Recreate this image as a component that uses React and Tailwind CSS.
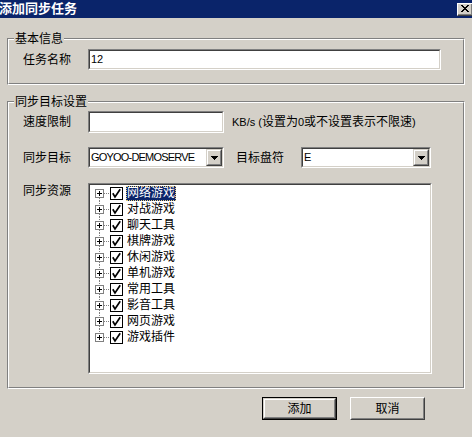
import React from "react";

function Sunken({ className = "", children }) {
  return (
    <div className={"border border-t-[#808080] border-l-[#808080] border-b-white border-r-white " + className}>
      <div className="h-full w-full border border-t-[#404040] border-l-[#404040] border-b-[#d4d0c8] border-r-[#d4d0c8] bg-white">
        {children}
      </div>
    </div>
  );
}

function Raised({ className = "", innerClassName = "", children }) {
  return (
    <div className={"border border-t-[#d4d0c8] border-l-[#d4d0c8] border-b-[#404040] border-r-[#404040] " + className}>
      <div className={"h-full w-full border border-t-white border-l-white border-b-[#808080] border-r-[#808080] bg-[#d4d0c8] " + innerClassName}>
        {children}
      </div>
    </div>
  );
}

function Group({ legend, className = "", children }) {
  return (
    <div className={"relative border border-t-[#808080] border-l-[#808080] border-b-white border-r-white " + className}>
      <div className="h-full w-full border border-t-white border-l-white border-b-[#808080] border-r-[#808080]">
        {children}
      </div>
      <span className="absolute left-[6px] top-[-7px] bg-[#d4d0c8] px-[1px] leading-[14px]">{legend}</span>
    </div>
  );
}

function Arrow() {
  return (
    <svg width="7" height="4" viewBox="0 0 7 4" shapeRendering="crispEdges">
      <rect x="0" y="0" width="7" height="1" fill="#000" />
      <rect x="1" y="1" width="5" height="1" fill="#000" />
      <rect x="2" y="2" width="3" height="1" fill="#000" />
      <rect x="3" y="3" width="1" height="1" fill="#000" />
    </svg>
  );
}

function Select({ className, value }) {
  return (
    <Sunken className={className + " h-[21px]"}>
      <div className="flex h-full">
        <span className="flex-1 pl-[1px] text-[11px] leading-[17px] tracking-[-0.8px]">{value}</span>
        <Raised className="w-[16px] h-full" innerClassName="flex items-center justify-center">
          <Arrow />
        </Raised>
      </div>
    </Sunken>
  );
}

function Connector({ first, last }) {
  return (
    <svg width="20" height="16" viewBox="0 0 20 16" shapeRendering="crispEdges" className="shrink-0">
      {!first && <line x1="9.5" y1="0" x2="9.5" y2="4" stroke="#808080" strokeDasharray="1 1" />}
      {!last && <line x1="9.5" y1="13" x2="9.5" y2="16" stroke="#808080" strokeDasharray="1 1" />}
      <line x1="14" y1="8.5" x2="20" y2="8.5" stroke="#808080" strokeDasharray="1 1" />
      <rect x="5.5" y="4.5" width="8" height="8" fill="#fff" stroke="#808080" />
      <line x1="7" y1="8.5" x2="12" y2="8.5" stroke="#000" />
      <line x1="9.5" y1="6" x2="9.5" y2="11" stroke="#000" />
    </svg>
  );
}

function Check() {
  return (
    <svg width="13" height="13" viewBox="0 0 13 13" className="shrink-0">
      <rect x="0.5" y="0.5" width="12" height="12" fill="#fff" stroke="#000" shapeRendering="crispEdges" />
      <polyline points="2.8,6.2 5,10 10.2,2.2" fill="none" stroke="#000" strokeWidth="1.7" />
    </svg>
  );
}

const items = ["网络游戏", "对战游戏", "聊天工具", "棋牌游戏", "休闲游戏", "单机游戏", "常用工具", "影音工具", "网页游戏", "游戏插件"];

function Button({ label, isDefault }) {
  const inner = (
    <Raised className="w-full h-full" innerClassName="flex items-center justify-center">
      <span className="leading-[14px]">{label}</span>
    </Raised>
  );
  if (isDefault) {
    return <div className="w-[75px] h-[23px] border border-black">{inner}</div>;
  }
  return (
    <div className="w-[75px] h-[23px] border border-t-white border-l-white border-b-[#404040] border-r-[#404040]">
      <div className="h-full w-full border border-t-[#d4d0c8] border-l-[#d4d0c8] border-b-[#808080] border-r-[#808080] bg-[#d4d0c8] flex items-center justify-center">
        <span className="leading-[14px]">{label}</span>
      </div>
    </div>
  );
}

export default function App() {
  return (
    <div className="w-[472px] h-[437px] bg-[#d4d0c8] overflow-hidden flex flex-col text-[12px] leading-[14px] text-black font-['Liberation_Sans','Noto_Sans_CJK_SC',sans-serif]">
      <div className="h-[18px] shrink-0 bg-[#0a246a] flex items-center justify-between">
        <span className="ml-[-1px] text-white font-bold text-[13px] leading-[16px]">添加同步任务</span>
        <div className="mr-[-1px] w-[16px] h-[13px] border border-t-white border-l-white border-b-[#404040] border-r-[#404040]">
          <div className="h-full w-full border-b border-r border-b-[#808080] border-r-[#808080] bg-[#d4d0c8] flex items-center justify-center">
            <svg width="8" height="7" viewBox="0 0 8 7" shapeRendering="crispEdges">
              <path d="M0 0h2v1h-2zM6 0h2v1h-2zM1 1h2v1h-2zM5 1h2v1h-2zM2 2h4v1h-4zM3 3h2v1h-2zM2 4h4v1h-4zM1 5h2v1h-2zM5 5h2v1h-2zM0 6h2v1h-2zM6 6h2v1h-2z" fill="#000" />
            </svg>
          </div>
        </div>
      </div>

      <div className="px-[7px] flex flex-col">
        <Group legend="基本信息" className="mt-[20px] h-[47px]">
          <div className="pt-[9px] flex items-center">
            <span className="w-[79px] pl-[14px]">任务名称</span>
            <Sunken className="w-[353px] h-[21px]">
              <span className="block pl-[1px] text-[11px] leading-[17px]">12</span>
            </Sunken>
          </div>
        </Group>

        <Group legend="同步目标设置" className="mt-[16px] h-[288px]">
          <div className="pt-[8px] flex flex-col">
            <div className="flex items-center">
              <span className="w-[79px] pl-[14px]">速度限制</span>
              <Sunken className="w-[136px] h-[22px]" />
              <span className="ml-[8px]"><span className="text-[11px]">KB/s (</span>设置为<span className="text-[11px]">0</span>或不设置表示不限速<span className="text-[11px]">)</span></span>
            </div>
            <div className="flex items-center mt-[14px]">
              <span className="w-[79px] pl-[14px]">同步目标</span>
              <Select className="w-[136px]" value="GOYOO-DEMOSERVE" />
              <span className="ml-[12px] w-[65px]">目标盘符</span>
              <Select className="w-[130px]" value="E" />
            </div>
            <div className="flex items-start mt-[15px]">
              <span className="w-[79px] pl-[14px] pt-[1px]">同步资源</span>
              <Sunken className="w-[344px] h-[191px]">
                <div className="flex flex-col">
                  {items.map((t, i) => (
                    <div key={t} className="flex items-center h-[16px]">
                      <Connector first={i === 0} last={i === items.length - 1} />
                      <Check />
                      <span
                        className={
                          i === 0
                            ? "ml-[3px] px-[1px] h-[15px] leading-[15px] bg-[#0a246a] text-white outline outline-1 outline-dotted outline-[#e8d080] -outline-offset-1"
                            : "ml-[3px] px-[1px] h-[15px] leading-[15px]"
                        }
                      >
                        {t}
                      </span>
                    </div>
                  ))}
                </div>
              </Sunken>
            </div>
          </div>
        </Group>

        <div className="mt-[8px] flex justify-end gap-[13px] pr-[40px]">
          <Button label="添加" isDefault />
          <Button label="取消" />
        </div>
      </div>
    </div>
  );
}
